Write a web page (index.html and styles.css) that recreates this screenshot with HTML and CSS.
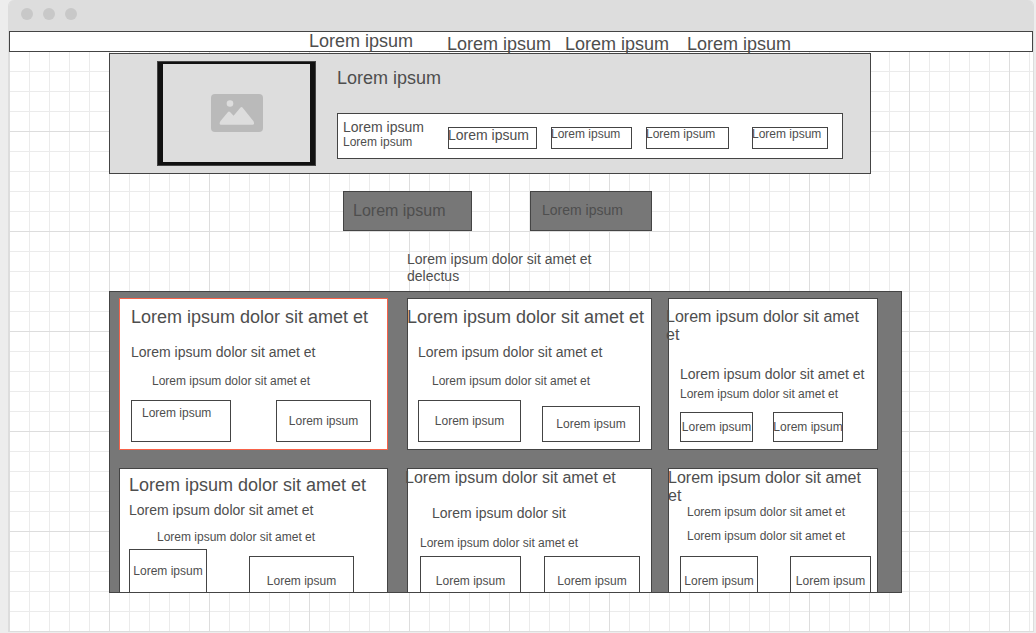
FILE: index.html
```html
<!DOCTYPE html>
<html lang="en">
<head>
<meta charset="utf-8">
<meta name="viewport" content="width=device-width, initial-scale=1">
<title>Wireframe</title>
<link rel="stylesheet" href="styles.css">
</head>
<body>
<div class="window">
  <div class="titlebar"><span class="dot"></span><span class="dot"></span><span class="dot"></span></div>
  <div class="canvas">
    <nav class="nav">
      <a class="nav-link nav-current" href="#">Lorem ipsum</a>
      <a class="nav-link" href="#">Lorem ipsum</a>
      <a class="nav-link" href="#">Lorem ipsum</a>
      <a class="nav-link" href="#">Lorem ipsum</a>
    </nav>
    <main>
      <div class="hero-row">
        <section class="hero">
          <div class="frame">
            <div class="picture">
              <svg class="picture-icon" viewBox="0 0 52 38" role="img" aria-label="Picture">
                <rect width="52" height="38" rx="4" fill="#bababa"/>
                <circle cx="19" cy="9.5" r="3.3" fill="#ddd"/>
                <path d="M9.500 27 17 18q1-1.200 2 0l3.600 3.700 6.900-8.200q1-1.200 2 0L42.500 27.300q1.500 3.400-1 3.400h-31.500q-2.500 0-.5-3.700z" fill="#ddd"/>
              </svg>
            </div>
          </div>
          <div class="hero-body">
            <h1 class="title">Lorem ipsum</h1>
            <div class="info">
              <div class="info-text">
                <p class="subtitle">Lorem ipsum</p>
                <p class="note">Lorem ipsum</p>
              </div>
              <button class="chip tag tag-a" type="button">Lorem ipsum</button>
              <button class="chip tag tag-b" type="button">Lorem ipsum</button>
              <button class="chip tag tag-c" type="button">Lorem ipsum</button>
              <button class="chip tag tag-d" type="button">Lorem ipsum</button>
            </div>
          </div>
        </section>
      </div>
      <div class="cta-row">
        <button class="cta cta-main" type="button">Lorem ipsum</button>
        <button class="cta cta-alt" type="button">Lorem ipsum</button>
      </div>
      <div class="intro-row">
        <p class="intro">Lorem ipsum dolor sit amet et delectus</p>
      </div>
      <div class="gallery-row">
        <section class="gallery">
          <article class="card card-one">
            <h2 class="title">Lorem ipsum dolor sit amet et</h2>
            <p class="subtitle">Lorem ipsum dolor sit amet et</p>
            <p class="note">Lorem ipsum dolor sit amet et</p>
            <div class="actions">
              <button class="chip chip-raised" type="button">Lorem ipsum</button>
              <button class="chip" type="button">Lorem ipsum</button>
            </div>
          </article>
          <article class="card card-two">
            <h2 class="title flush">Lorem ipsum dolor sit amet et</h2>
            <p class="subtitle">Lorem ipsum dolor sit amet et</p>
            <p class="note">Lorem ipsum dolor sit amet et</p>
            <div class="actions">
              <button class="chip" type="button">Lorem ipsum</button>
              <button class="chip" type="button">Lorem ipsum</button>
            </div>
          </article>
          <article class="card card-three">
            <h2 class="title title-small overhang">Lorem ipsum dolor sit amet et</h2>
            <p class="subtitle">Lorem ipsum dolor sit amet et</p>
            <p class="note">Lorem ipsum dolor sit amet et</p>
            <div class="actions">
              <button class="chip" type="button">Lorem ipsum</button>
              <button class="chip" type="button">Lorem ipsum</button>
            </div>
          </article>
          <article class="card card-cut card-four">
            <h2 class="title">Lorem ipsum dolor sit amet et</h2>
            <p class="subtitle">Lorem ipsum dolor sit amet et</p>
            <p class="note">Lorem ipsum dolor sit amet et</p>
            <div class="actions">
              <button class="chip" type="button">Lorem ipsum</button>
              <button class="chip chip-lower" type="button">Lorem ipsum</button>
            </div>
          </article>
          <article class="card card-cut card-five">
            <h2 class="title title-small overhang">Lorem ipsum dolor sit amet et</h2>
            <p class="subtitle">Lorem ipsum dolor sit</p>
            <p class="note">Lorem ipsum dolor sit amet et</p>
            <div class="actions">
              <button class="chip" type="button">Lorem ipsum</button>
              <button class="chip" type="button">Lorem ipsum</button>
            </div>
          </article>
          <article class="card card-cut card-six">
            <h2 class="title title-small flush">Lorem ipsum dolor sit amet et</h2>
            <p class="note">Lorem ipsum dolor sit amet et</p>
            <p class="note note-next">Lorem ipsum dolor sit amet et</p>
            <div class="actions">
              <button class="chip" type="button">Lorem ipsum</button>
              <button class="chip" type="button">Lorem ipsum</button>
            </div>
          </article>
        </section>
      </div>
    </main>
  </div>
</div>
</body>
</html>
```

FILE: styles.css
```css
* { box-sizing: border-box; min-width: 0; }

body {
  margin: 0;
  background: #ededed;
  color: #4e4e4e;
  font-family: "Liberation Sans", Arial, sans-serif;
}

h1, h2, p { margin: 0; font-weight: 400; }
button { font-family: inherit; color: inherit; margin: 0; }

/* Browser window */
.window {
  display: flex;
  flex-direction: column;
  min-height: calc(100vh - 1px);
  margin: 0 2px 1px 8px;
  border: 1px solid #ddd;
  border-top: 0;
  border-radius: 6px 6px 0 0;
  overflow: hidden;
}
.titlebar {
  display: flex;
  gap: 10px;
  padding: 8px 12px 11px;
  background: #ddd;
}
.dot { width: 12px; height: 12px; border-radius: 50%; background: #c8c8c8; }

.canvas {
  flex: 1;
  background-color: #fff;
  background-image:
    linear-gradient(to right, #ddd 1px, transparent 1px),
    linear-gradient(to bottom, #ddd 1px, transparent 1px),
    linear-gradient(to right, #ebebeb 1px, transparent 1px),
    linear-gradient(to bottom, #ebebeb 1px, transparent 1px);
  background-size: 100px 100px, 100px 100px, 20px 20px, 20px 20px;
}

/* Text */
.title { font-size: 18px; line-height: 18px; white-space: nowrap; }
.title-small { font-size: 16px; white-space: normal; padding-right: 8px; }
.subtitle { font-size: 14px; line-height: 16px; white-space: nowrap; }
.note { font-size: 12px; line-height: 14px; white-space: nowrap; }
.flush { margin-left: -1px; }
.overhang { margin-left: -3px; }

/* Navigation */
.nav {
  display: grid;
  grid-template-columns: 299fr 138fr 118fr 122fr 345fr;
  height: 21px;
  border: 1px solid #444;
  background: #fff;
}
.nav-link {
  padding-top: 3px;
  color: inherit;
  font-size: 18px;
  line-height: 18px;
  text-decoration: none;
  white-space: nowrap;
}
.nav-current { grid-column: 2; padding-top: 0; }

/* Hero */
.hero-row { display: grid; grid-template-columns: 100fr 762fr 162fr; padding-top: 1px; }
.hero {
  grid-column: 2;
  display: grid;
  grid-template-columns: 47fr 159fr 21fr 506fr 27fr;
  padding: 7px 0;
  border: 1px solid #444;
  background: #ddd;
}
.frame {
  grid-column: 2;
  display: flex;
  padding: 2px 5px 3px;
  border: 1px solid #444;
  background: #111;
}
.picture {
  flex: 1;
  display: flex;
  align-items: center;
  justify-content: center;
  min-height: 98px;
  background: #ddd;
}
.picture-icon { width: 52px; height: 38px; }
.hero-body { grid-column: 4; padding-top: 8px; }
.info {
  display: grid;
  grid-template-columns: 5fr 105fr 89fr 14fr 81fr 14fr 83fr 23fr 76fr 14fr;
  align-items: start;
  min-height: 46px;
  margin-top: 26px;
  padding-top: 5px;
  border: 1px solid #444;
  background: #fff;
}
.info-text { grid-column: 2; }

/* Outlined buttons */
.chip {
  display: flex;
  align-items: center;
  justify-content: center;
  padding: 0;
  border: 1px solid #444;
  border-radius: 0;
  background: #fff;
  font-size: 12px;
  line-height: 14px;
  white-space: nowrap;
}
.tag {
  align-items: flex-start;
  justify-content: flex-start;
  height: 22px;
  margin-top: 8px;
  line-height: 1;
  text-indent: -1px;
}
.tag-a { grid-column: 3; font-size: 14px; }
.tag-b { grid-column: 5; }
.tag-c { grid-column: 7; }
.tag-d { grid-column: 9; }

/* Call to action */
.cta-row { display: grid; grid-template-columns: 334fr 129fr 58fr 122fr 381fr; padding-top: 17px; }
.cta {
  display: flex;
  align-items: flex-start;
  min-height: 40px;
  padding: 11px 9px;
  border: 1px solid #444;
  border-radius: 0;
  background: #777;
  font-size: 14px;
  line-height: 1;
}
.cta-main { grid-column: 2; font-size: 16px; }
.cta-alt { grid-column: 4; padding-left: 11px; }

.intro-row { display: grid; grid-template-columns: 398fr 210fr 416fr; padding-top: 20px; }
.intro { grid-column: 2; font-size: 14px; line-height: 17px; }

/* Gallery */
.gallery-row { display: grid; grid-template-columns: 100fr 793fr 131fr; padding: 6px 0 38px; }
.gallery {
  grid-column: 2;
  display: grid;
  grid-template-columns: 9fr 269fr 19fr 245fr 16fr 210fr 23fr;
  grid-template-rows: minmax(152px, auto) minmax(124px, auto);
  row-gap: 18px;
  padding-top: 6px;
  border: 1px solid #444;
  background: #777;
}
.card {
  display: flex;
  flex-direction: column;
  padding-top: 9px;
  border: 1px solid #444;
  background: #fff;
}
.card-cut { padding-top: 0; border-bottom: 0; }
.actions { display: grid; align-items: end; }
.actions .chip { height: 42px; }
.actions .chip:first-child { grid-column: 2; }
.actions .chip:last-child { grid-column: 4; }
.actions .chip-raised { align-items: flex-start; justify-content: flex-start; padding: 5px 10px; }

.card-cut .actions { flex: 1; align-items: stretch; }
.card-cut .chip { height: auto; align-items: flex-start; padding-top: 17px; border-bottom: 0; }

.card-one { grid-column: 2; border-color: #f76249; }
.card-one .title { padding-left: 11px; }
.card-one .subtitle { margin-top: 18px; padding-left: 11px; }
.card-one .note { margin-top: 14px; padding-left: 32px; }
.card-one .actions { margin-top: 12px; grid-template-columns: 11fr 100fr 45fr 95fr 16fr; }

.card-two { grid-column: 4; }
.card-two .subtitle { margin-top: 18px; padding-left: 10px; }
.card-two .note { margin-top: 14px; padding-left: 24px; }
.card-two .actions { margin-top: 12px; grid-template-columns: 10fr 103fr 21fr 98fr 11fr; }
.card-two .chip:last-child { height: 36px; }

.card-three { grid-column: 6; }
.card-three .subtitle { margin-top: 22px; padding-left: 11px; }
.card-three .note { margin-top: 5px; padding-left: 11px; }
.card-three .actions { margin-top: 11px; grid-template-columns: 11fr 73fr 20fr 70fr 34fr; }
.card-three .chip { height: 30px; }

.card-four { grid-column: 2; padding-top: 7px; }
.card-four .title { padding-left: 9px; }
.card-four .subtitle { margin-top: 8px; padding-left: 9px; }
.card-four .note { margin-top: 12px; padding-left: 37px; }
.card-four .actions { margin-top: 5px; grid-template-columns: 9fr 78fr 42fr 105fr 33fr; }
.card-four .chip:first-child { padding-top: 14px; }
.chip-lower { margin-top: 7px; }

.card-five { grid-column: 4; }
.card-five .subtitle { margin-top: 18px; padding-left: 24px; }
.card-five .note { margin-top: 15px; padding-left: 12px; }
.card-five .actions { margin-top: 6px; grid-template-columns: 12fr 101fr 23fr 96fr 11fr; }

.card-six { grid-column: 6; }
.card-six .note { padding-left: 18px; }
.card-six .note-next { margin-top: 10px; }
.card-six .actions { margin-top: 13px; grid-template-columns: 11fr 78fr 32fr 81fr 6fr; }
```
